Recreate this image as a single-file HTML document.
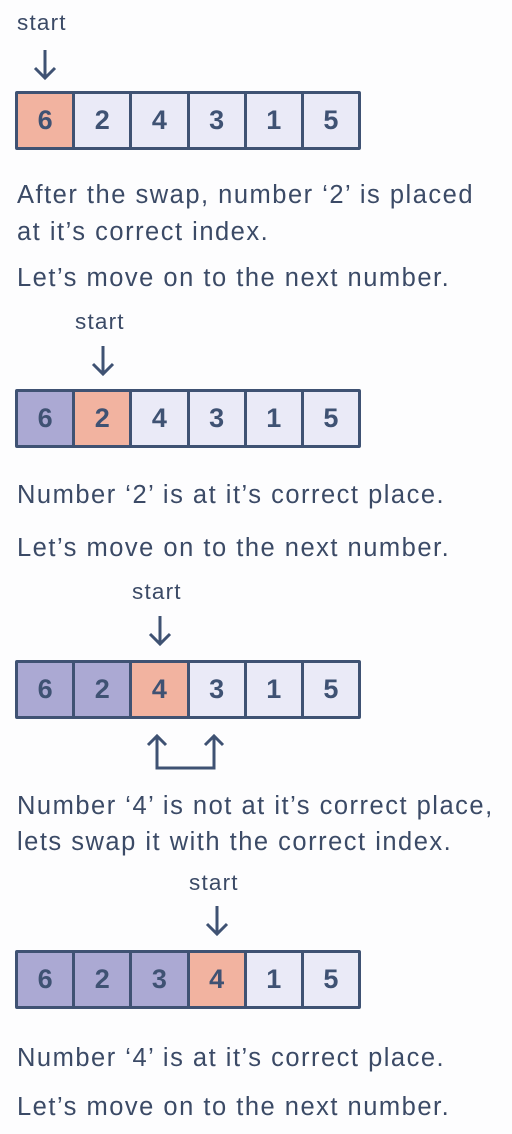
<!DOCTYPE html>
<html><head><meta charset="utf-8"><style>
body{margin:0;width:512px;height:1134px;background:#fdfdfe;position:relative;overflow:hidden;font-family:"Liberation Sans",sans-serif;color:#3b4a66}
.t{position:absolute;left:17px;font-size:25.5px;letter-spacing:1.5px;white-space:nowrap;line-height:1}
.s{position:absolute;font-size:22.5px;letter-spacing:1.2px;line-height:1}
.arr{position:absolute;width:56px;height:44px}
.row{position:absolute;left:15px;width:346px;height:59px;display:flex;border:3px solid #3f5273;box-sizing:border-box;background:#3f5273;gap:3px;border-radius:2px}
.row div{flex:1;display:flex;align-items:center;justify-content:center;font-weight:bold;font-size:27px;color:#3f5273;background:#eaeaf7}
.row .o{background:#f2b3a0}.row .p{background:#aba9d3}
</style></head><body>
<div class="s" style="left:17px;top:12px">start</div>
<svg class="arr" style="left:17px;top:48px" viewBox="0 0 56 44"><path d="M28 2V29M18 20L28 30L38 20" fill="none" stroke="#3f5273" stroke-width="3"/></svg>
<div class="row" style="top:91px"><div class="o">6</div><div>2</div><div>4</div><div>3</div><div>1</div><div>5</div></div>
<div class="t" style="top:183px">After the swap, number ‘2’ is placed</div>
<div class="t" style="top:220px">at it’s correct index.</div>
<div class="t" style="top:266px">Let’s move on to the next number.</div>

<div class="s" style="left:75px;top:311px">start</div>
<svg class="arr" style="left:75px;top:344px" viewBox="0 0 56 44"><path d="M28 2V29M18 20L28 30L38 20" fill="none" stroke="#3f5273" stroke-width="3"/></svg>
<div class="row" style="top:389px"><div class="p">6</div><div class="o">2</div><div>4</div><div>3</div><div>1</div><div>5</div></div>
<div class="t" style="top:483px">Number ‘2’ is at it’s correct place.</div>
<div class="t" style="top:536px">Let’s move on to the next number.</div>

<div class="s" style="left:132px;top:581px">start</div>
<svg class="arr" style="left:132px;top:614px" viewBox="0 0 56 44"><path d="M28 2V29M18 20L28 30L38 20" fill="none" stroke="#3f5273" stroke-width="3"/></svg>
<div class="row" style="top:660px"><div class="p">6</div><div class="p">2</div><div class="o">4</div><div>3</div><div>1</div><div>5</div></div>
<svg style="position:absolute;left:140px;top:732px" width="100" height="44" viewBox="0 0 100 44"><path d="M17 4V36H74V4M8 13L17 4L26 13M65 13L74 4L83 13" fill="none" stroke="#3f5273" stroke-width="3"/></svg>
<div class="t" style="top:794px">Number ‘4’ is not at it’s correct place,</div>
<div class="t" style="top:830px">lets swap it with the correct index.</div>

<div class="s" style="left:189px;top:872px">start</div>
<svg class="arr" style="left:189px;top:904px" viewBox="0 0 56 44"><path d="M28 2V29M18 20L28 30L38 20" fill="none" stroke="#3f5273" stroke-width="3"/></svg>
<div class="row" style="top:950px"><div class="p">6</div><div class="p">2</div><div class="p">3</div><div class="o">4</div><div>1</div><div>5</div></div>
<div class="t" style="top:1046px">Number ‘4’ is at it’s correct place.</div>
<div class="t" style="top:1095px">Let’s move on to the next number.</div>
</body></html>
